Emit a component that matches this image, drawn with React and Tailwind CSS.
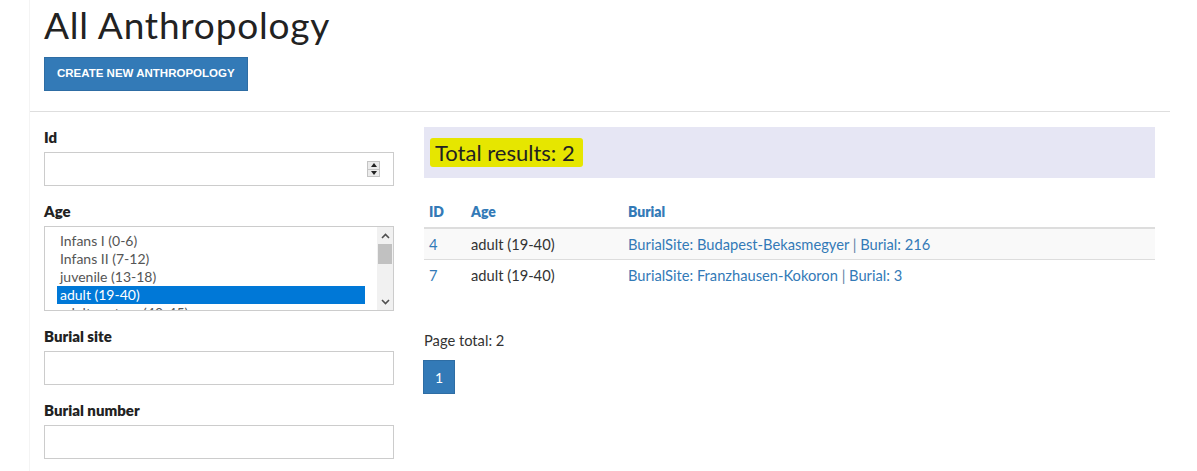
import React from "react";

const ages = [
  "Infans I (0-6)",
  "Infans II (7-12)",
  "juvenile (13-18)",
  "adult (19-40)",
  "adult-mature (40-45)",
];

const rows = [
  { id: 4, age: "adult (19-40)", site: "Budapest-Bekasmegyer", burial: "216" },
  { id: 7, age: "adult (19-40)", site: "Franzhausen-Kokoron", burial: "3" },
];

function Chevron({ up }) {
  return (
    <svg width="9" height="6" viewBox="0 0 9 6" className="block">
      <path
        d={up ? "M1 5 L4.5 1.5 L8 5" : "M1 1 L4.5 4.5 L8 1"}
        fill="none"
        stroke="#505050"
        strokeWidth="1.6"
      />
    </svg>
  );
}

function Label({ children }) {
  return <div className="font-extrabold text-[15px] leading-[20px] mb-[5px] text-[#222]">{children}</div>;
}

function TextInput({ spinner }) {
  return (
    <div className="h-[34px] w-full border border-[#ccc] bg-white flex items-center justify-end pr-[13px]">
      {spinner && (
        <div className="w-[13px] h-[16px] border border-[#c4c4c4] bg-[#ebebeb] flex flex-col">
          <div className="flex-1 flex items-center justify-center border-b border-[#c4c4c4]">
            <div className="w-0 h-0 border-l-[3px] border-r-[3px] border-b-[4px] border-l-transparent border-r-transparent border-b-[#222]" />
          </div>
          <div className="flex-1 flex items-center justify-center">
            <div className="w-0 h-0 border-l-[3px] border-r-[3px] border-t-[4px] border-l-transparent border-r-transparent border-t-[#222]" />
          </div>
        </div>
      )}
    </div>
  );
}

export default function App() {
  return (
    <div
      className="min-h-[471px] bg-white text-[14px] text-[#333]"
      style={{ fontFamily: "Lato, 'Noto Sans', sans-serif" }}
    >
      <div className="ml-[29px] w-[1141px] min-h-[471px] border-l border-[#f4f4f4]">
        <div className="pl-[14px] pr-[15px] pt-[5px]">
          <h1 className="text-[37px] leading-[40px] tracking-[0.8px] font-normal text-[#222]">All Anthropology</h1>
          <button
            className="mt-[12px] h-[34px] px-[12px] bg-[#337ab7] border border-[#2e6da4] text-white text-[11.5px] font-bold uppercase"
            style={{ fontFamily: "'Liberation Sans', Arial, sans-serif" }}
          >
            Create New Anthropology
          </button>
        </div>
        <div className="mt-[20px] border-t border-[#dedede]" />

        <div className="pl-[14px] pr-[15px] pt-[15px] flex gap-[30px]">
          <div className="w-[350px] shrink-0 flex flex-col gap-[15px]">
            <div>
              <Label>Id</Label>
              <TextInput spinner />
            </div>
            <div>
              <Label>Age</Label>
              <div className="h-[85px] border border-[#ccc] bg-white flex overflow-hidden">
                <div className="flex-1 h-[83px] pl-[12px] pr-[12px] pt-[5px] overflow-hidden text-[#555]">
                  {ages.map((a, i) => (
                    <div
                      key={i}
                      className={
                        "h-[18px] leading-[18px] px-[3px] whitespace-nowrap " +
                        (i === 3 ? "bg-[#0078d7] text-white" : "")
                      }
                    >
                      {a}
                    </div>
                  ))}
                </div>
                <div className="w-[16px] bg-[#f1f1f1] flex flex-col">
                  <div className="h-[17px] flex items-center justify-center">
                    <Chevron up />
                  </div>
                  <div className="mx-[1px] h-[20px] bg-[#c1c1c1]" />
                  <div className="flex-1" />
                  <div className="h-[17px] flex items-center justify-center">
                    <Chevron />
                  </div>
                </div>
              </div>
            </div>
            <div>
              <Label>Burial site</Label>
              <TextInput />
            </div>
            <div>
              <Label>Burial number</Label>
              <TextInput />
            </div>
          </div>

          <div className="flex-1">
            <div className="h-[51px] bg-[#e6e6f4] flex items-center pl-[6px]">
              <span className="bg-[#e6e600] text-[22px] leading-[29px] pl-[5px] pr-[8px] rounded-[3px] text-[#222]">
                Total results: 2
              </span>
            </div>

            <table className="mt-[19px] w-full border-collapse">
              <thead>
                <tr className="border-b-2 border-[#ddd]">
                  <th className="w-[42px] px-[5px] py-[5px] text-left font-extrabold text-[#337ab7] leading-[20px]">ID</th>
                  <th className="w-[157px] px-[5px] py-[5px] text-left font-extrabold text-[#337ab7] leading-[20px]">Age</th>
                  <th className="px-[5px] py-[5px] text-left font-extrabold text-[#337ab7] leading-[20px]">Burial</th>
                </tr>
              </thead>
              <tbody className="text-[14.7px]">
                {rows.map((r, i) => (
                  <tr key={r.id} className={(i === 0 ? "bg-[#f9f9f9] " : "") + (i > 0 ? "border-t border-[#ddd]" : "")}>
                    <td className="px-[5px] py-[5px] leading-[20px] text-[#337ab7]">{r.id}</td>
                    <td className="px-[5px] py-[5px] leading-[20px]">{r.age}</td>
                    <td className="px-[5px] py-[5px] leading-[20px] text-[#337ab7]">
                      <span>BurialSite: {r.site}</span> <span className="text-[#5a7fa6]">|</span>{" "}
                      <span>Burial: {r.burial}</span>
                    </td>
                  </tr>
                ))}
              </tbody>
            </table>

            <div className="mt-[40px] leading-[20px] text-[14.7px]">Page total: 2</div>
            <div className="mt-[10px] flex">
              <div className="w-[32px] h-[34px] -ml-[1px] bg-[#337ab7] border border-[#2e6da4] text-white flex items-center justify-center">
                1
              </div>
            </div>
          </div>
        </div>
      </div>
    </div>
  );
}
